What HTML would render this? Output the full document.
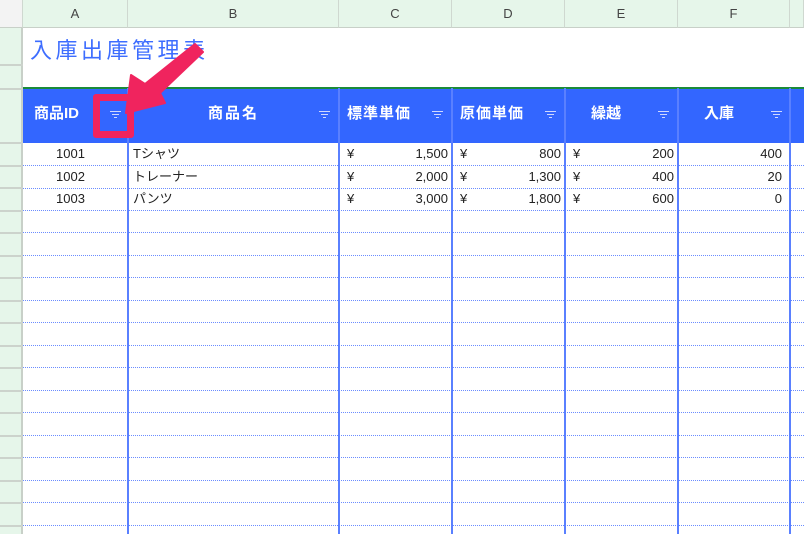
<!DOCTYPE html>
<html><head><meta charset="utf-8"><style>
body{margin:0;width:804px;height:534px;overflow:hidden;background:#fff;font-family:"Liberation Sans","Noto Sans CJK JP",sans-serif;position:relative}
.a{position:absolute}
.ch{top:0;height:28px;background:#e6f6ea;border-right:1px solid #cfd8d0;border-bottom:1px solid #c8d0c8;box-sizing:border-box;text-align:center;line-height:28px;font-size:13px;color:#444}
.hd{top:88px;height:55px;background:#3366ff;box-sizing:border-box;color:#fff;font-weight:bold;font-size:15px;line-height:52px}
.vl{top:88px;width:2px;height:446px;background:#5a80ff}
.hl{left:23px;width:781px;height:1px;background:repeating-linear-gradient(90deg,#6a8cff 0 1px,#fff 1px 2px)}
.rl{left:0;width:23px;height:0;border-top:2px solid #ccd3cc}
.t{font-size:13px;color:#222;height:22px;line-height:22px}
.f{position:absolute;top:21px;width:12px}
.f i{display:block;height:1px;background:#cfd8ff;margin:2px auto}
</style></head><body>
<div class="a" style="left:0;top:0;width:23px;height:534px;background:#e6f6ea;border-right:2px solid #c8d0c8;box-sizing:border-box"></div>
<div class="a ch" style="left:0;width:23px;background:#f3f3f3"></div>
<div class="a ch" style="left:23px;width:105px">A</div>
<div class="a ch" style="left:128px;width:211px">B</div>
<div class="a ch" style="left:339px;width:113px">C</div>
<div class="a ch" style="left:452px;width:113px">D</div>
<div class="a ch" style="left:565px;width:113px">E</div>
<div class="a ch" style="left:678px;width:112px">F</div>
<div class="a ch" style="left:790px;width:14px"></div>
<div class="a rl" style="top:64px"></div><div class="a rl" style="top:88px"></div><div class="a rl" style="top:142px"></div><div class="a rl" style="top:165px"></div><div class="a rl" style="top:187px"></div><div class="a rl" style="top:210px"></div><div class="a rl" style="top:232px"></div><div class="a rl" style="top:255px"></div><div class="a rl" style="top:277px"></div><div class="a rl" style="top:300px"></div><div class="a rl" style="top:322px"></div><div class="a rl" style="top:345px"></div><div class="a rl" style="top:367px"></div><div class="a rl" style="top:390px"></div><div class="a rl" style="top:412px"></div><div class="a rl" style="top:435px"></div><div class="a rl" style="top:457px"></div><div class="a rl" style="top:480px"></div><div class="a rl" style="top:502px"></div><div class="a rl" style="top:525px"></div>
<div class="a" style="left:30px;top:33px;font-size:22px;color:#3d6dff;letter-spacing:3.5px">入庫出庫管理表</div>
<div class="a hd" style="left:23px;width:781px"></div>
<div class="a hd" style="left:23px;width:105px;background:none;padding-left:11px">商品ID<div class="f" style="left:86px"><i style="width:11px"></i><i style="width:7px"></i><i style="width:3px"></i></div></div>
<div class="a hd" style="left:128px;width:211px;background:none;text-align:center;letter-spacing:2px">商品名<div class="f" style="left:190px"><i style="width:11px"></i><i style="width:7px"></i><i style="width:3px"></i></div></div>
<div class="a hd" style="left:339px;width:113px;background:none;padding-left:8px;letter-spacing:1px">標準単価<div class="f" style="left:92px"><i style="width:11px"></i><i style="width:7px"></i><i style="width:3px"></i></div></div>
<div class="a hd" style="left:452px;width:113px;background:none;padding-left:8px;letter-spacing:1px">原価単価<div class="f" style="left:92px"><i style="width:11px"></i><i style="width:7px"></i><i style="width:3px"></i></div></div>
<div class="a hd" style="left:565px;width:113px;background:none;padding-left:26px">繰越<div class="f" style="left:92px"><i style="width:11px"></i><i style="width:7px"></i><i style="width:3px"></i></div></div>
<div class="a hd" style="left:678px;width:112px;background:none;padding-left:26px">入庫<div class="f" style="left:92px"><i style="width:11px"></i><i style="width:7px"></i><i style="width:3px"></i></div></div>
<div class="a" style="left:23px;top:87px;width:781px;border-top:2px solid #1a8a3a"></div>
<div class="a hl" style="top:165px"></div><div class="a hl" style="top:188px"></div><div class="a hl" style="top:210px"></div><div class="a hl" style="top:232px"></div><div class="a hl" style="top:255px"></div><div class="a hl" style="top:277px"></div><div class="a hl" style="top:300px"></div><div class="a hl" style="top:322px"></div><div class="a hl" style="top:345px"></div><div class="a hl" style="top:367px"></div><div class="a hl" style="top:390px"></div><div class="a hl" style="top:412px"></div><div class="a hl" style="top:435px"></div><div class="a hl" style="top:457px"></div><div class="a hl" style="top:480px"></div><div class="a hl" style="top:502px"></div><div class="a hl" style="top:525px"></div>
<div class="a vl" style="left:127px"></div><div class="a vl" style="left:338px"></div><div class="a vl" style="left:451px"></div><div class="a vl" style="left:564px"></div><div class="a vl" style="left:677px"></div><div class="a vl" style="left:789px"></div>
<div class="a t" style="left:56px;top:143px">1001</div><div class="a t" style="left:56px;top:166px">1002</div><div class="a t" style="left:56px;top:188px">1003</div>
<div class="a t" style="left:133px;top:143px">Tシャツ</div><div class="a t" style="left:133px;top:166px">トレーナー</div><div class="a t" style="left:133px;top:188px">パンツ</div>
<div class="a t" style="left:347px;top:143px">¥</div><div class="a t" style="left:347px;top:166px">¥</div><div class="a t" style="left:347px;top:188px">¥</div>
<div class="a t" style="left:460px;top:143px">¥</div><div class="a t" style="left:460px;top:166px">¥</div><div class="a t" style="left:460px;top:188px">¥</div>
<div class="a t" style="left:573px;top:143px">¥</div><div class="a t" style="left:573px;top:166px">¥</div><div class="a t" style="left:573px;top:188px">¥</div>
<div class="a t" style="right:356px;top:143px">1,500</div><div class="a t" style="right:356px;top:166px">2,000</div><div class="a t" style="right:356px;top:188px">3,000</div>
<div class="a t" style="right:243px;top:143px">800</div><div class="a t" style="right:243px;top:166px">1,300</div><div class="a t" style="right:243px;top:188px">1,800</div>
<div class="a t" style="right:130px;top:143px">200</div><div class="a t" style="right:130px;top:166px">400</div><div class="a t" style="right:130px;top:188px">600</div>
<div class="a t" style="right:22px;top:143px">400</div><div class="a t" style="right:22px;top:166px">20</div><div class="a t" style="right:22px;top:188px">0</div>
<div class="a" style="left:93px;top:94px;width:41px;height:44px;border:7px solid #f0245e;border-radius:3px;box-sizing:border-box"></div>
<svg class="a" style="left:0;top:0" width="804" height="534"><polygon points="195,44 203,52 160,93 165,103 126,113 131,75 145,84" fill="#f0245e" stroke="#f0245e" stroke-width="2" stroke-linejoin="round"/></svg>
</body></html>
